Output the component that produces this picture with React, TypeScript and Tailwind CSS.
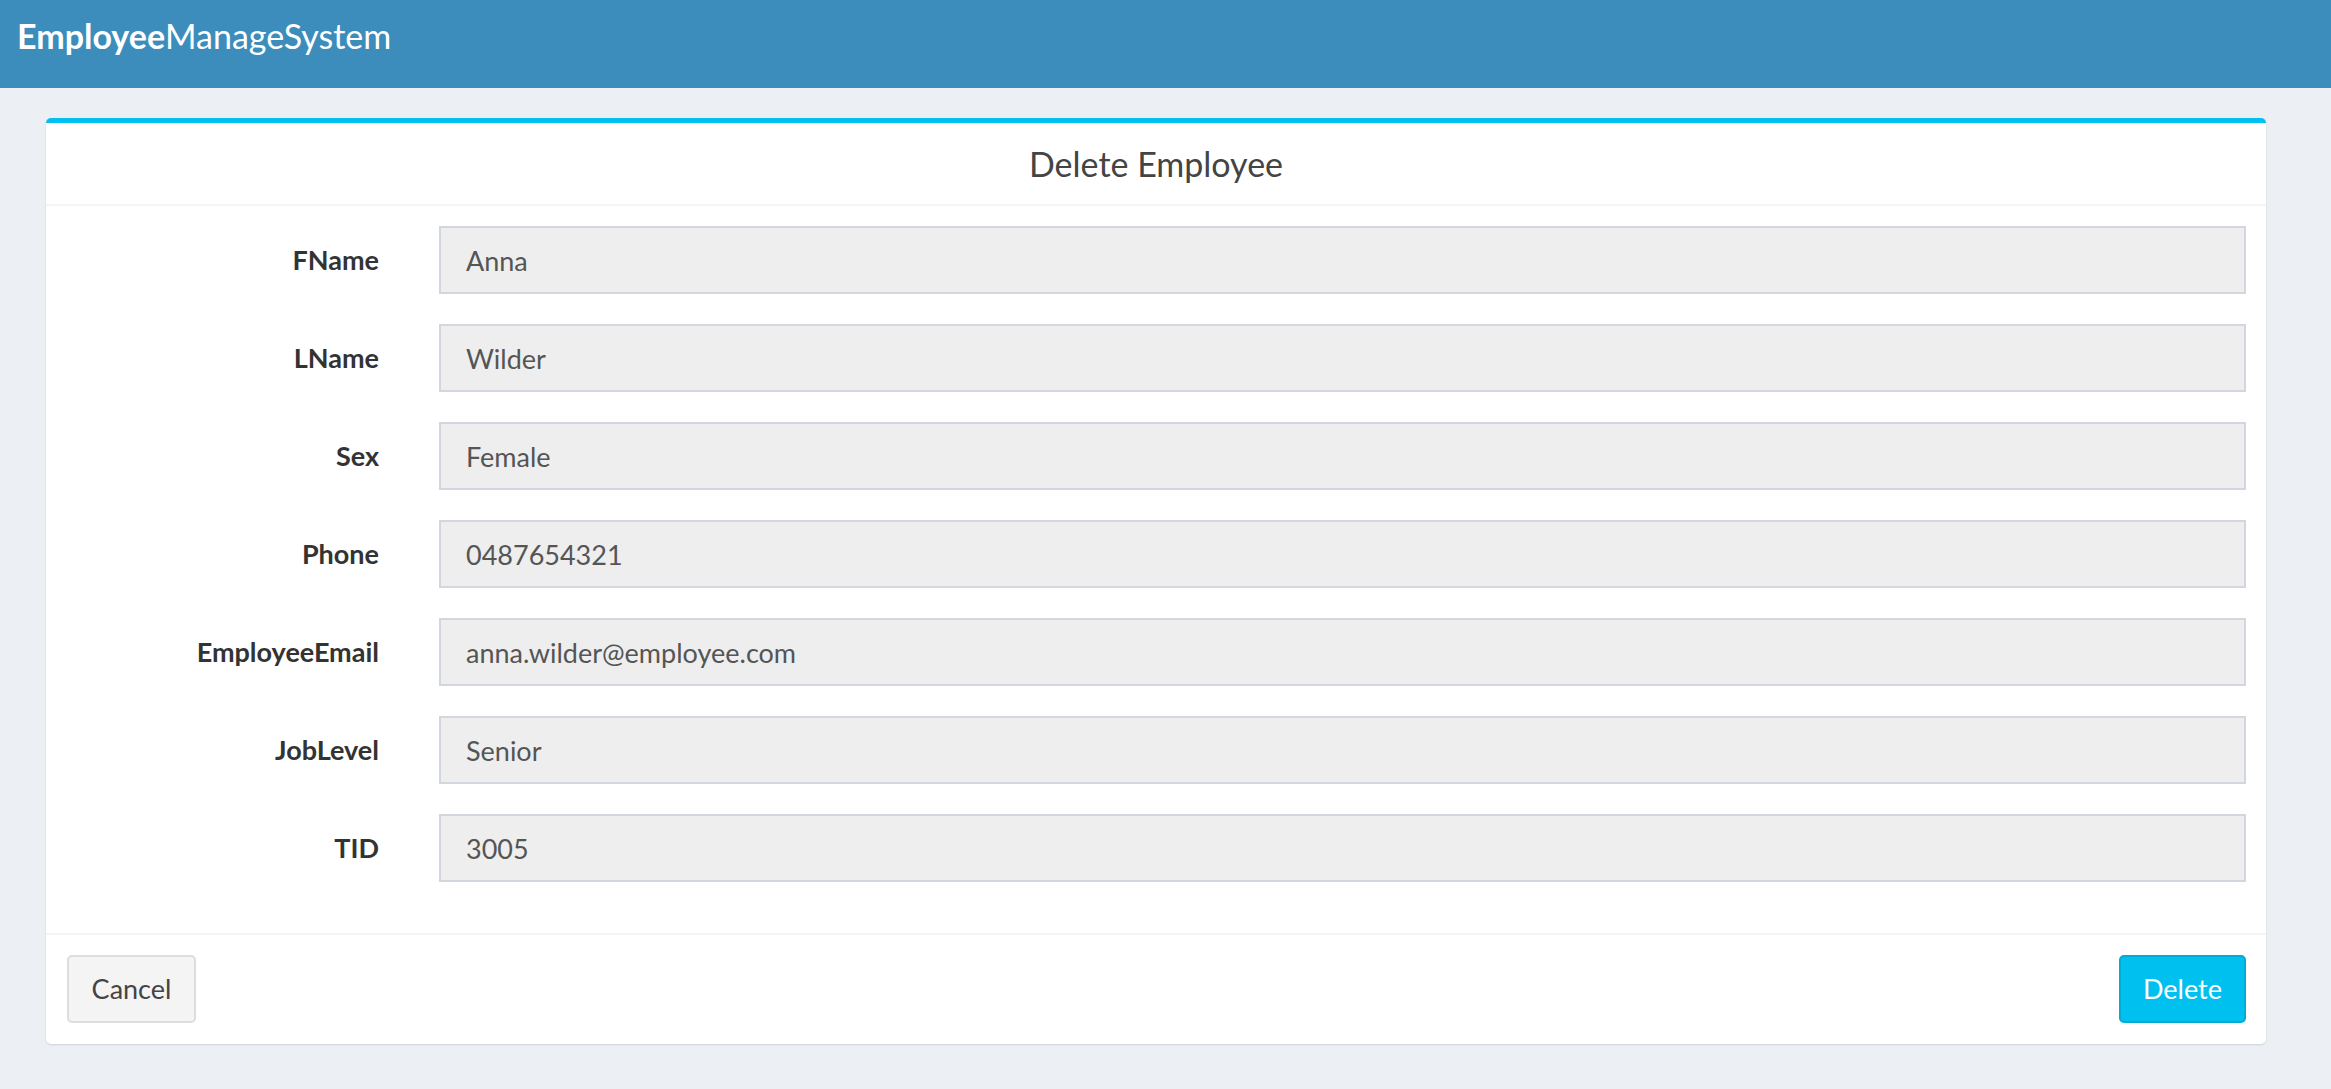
const fields = [
  { label: 'FName', value: 'Anna' },
  { label: 'LName', value: 'Wilder' },
  { label: 'Sex', value: 'Female' },
  { label: 'Phone', value: '0487654321' },
  { label: 'EmployeeEmail', value: 'anna.wilder@employee.com' },
  { label: 'JobLevel', value: 'Senior' },
  { label: 'TID', value: '3005' },
]

const font = { fontFamily: 'Lato, "Noto Sans", sans-serif' }

export default function App() {
  return (
    <div className="min-h-[1089px] bg-[#ecf0f5]" style={font}>
      <header className="h-[88px] bg-[#3c8dbc] pl-[17px] pt-[14px]">
        <span className="text-[34px] leading-[44px] text-white">
          <b className="font-bold">Employee</b>ManageSystem
        </span>
      </header>

      <main className="pl-[46px] pr-[65px] pt-[30px]">
        <div className="rounded-[5px] border-t-[5px] border-[#00c0ef] bg-white shadow-[0_1px_2px_rgba(0,0,0,0.12)]">
          <div className="flex h-[83px] items-center justify-center border-b-2 border-[#f4f4f4]">
            <h3 className="text-[34px] leading-none text-[#444]">Delete Employee</h3>
          </div>

          <form className="flex flex-col gap-[30px] pb-[51px] pr-[20px] pt-[20px]">
            {fields.map((f) => (
              <div key={f.label} className="flex items-center">
                <label className="w-[333px] shrink-0 text-right text-[27px] font-bold text-[#333]">
                  {f.label}
                </label>
                <input
                  readOnly
                  value={f.value}
                  className="ml-[60px] h-[68px] flex-1 border-2 border-[#d2d6de] bg-[#eeeeee] pl-[25px] text-[27px] text-[#555] outline-none"
                  style={font}
                />
              </div>
            ))}
          </form>

          <div className="flex items-center justify-between border-t-2 border-[#f4f4f4] px-[20px] pb-[21px] pt-[20px]">
            <button
              type="button"
              className="ml-px h-[68px] w-[129px] rounded-[5px] border-2 border-[#dddddd] bg-[#f4f4f4] text-[27px] text-[#444]"
              style={font}
            >
              Cancel
            </button>
            <button
              type="button"
              className="h-[68px] w-[127px] rounded-[5px] border-2 border-[#00acd6] bg-[#00c0ef] text-[27px] text-white"
              style={font}
            >
              Delete
            </button>
          </div>
        </div>
      </main>
    </div>
  )
}
